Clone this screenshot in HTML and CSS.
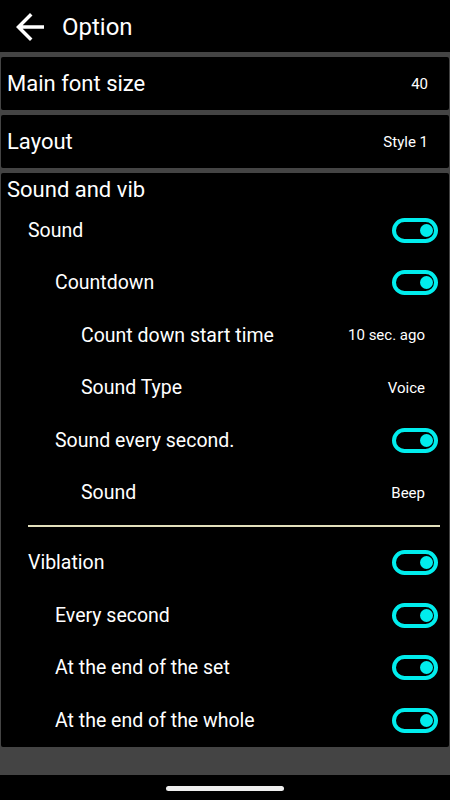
FILE: index.html
```html
<!DOCTYPE html>
<html lang="en">
<head>
  <meta charset="UTF-8">
  <title>Option</title>
  <link rel="stylesheet" href="styles.css">
</head>
<body>
  <div class="app">
    <header class="toolbar">
      <svg class="back" viewBox="0 0 24 24" width="42" height="42"><path fill="#fff" d="M20 11H7.83l5.59-5.59L12 4l-8 8 8 8 1.41-1.41L7.83 13H20v-2z"/></svg>
      <h1>Option</h1>
    </header>

    <main class="list">
      <section class="card single">
        <span class="label big">Main font size</span>
        <span class="value">40</span>
      </section>

      <section class="card single">
        <span class="label big">Layout</span>
        <span class="value">Style 1</span>
      </section>

      <section class="card group">
        <div class="group-title big">Sound and vib</div>

        <div class="row lv1"><span class="label">Sound</span><span class="toggle on"></span></div>
        <div class="row lv2"><span class="label">Countdown</span><span class="toggle on"></span></div>
        <div class="row lv3"><span class="label">Count down start time</span><span class="value">10 sec. ago</span></div>
        <div class="row lv3"><span class="label">Sound Type</span><span class="value">Voice</span></div>
        <div class="row lv2"><span class="label">Sound every second.</span><span class="toggle on"></span></div>
        <div class="row lv3"><span class="label">Sound</span><span class="value">Beep</span></div>

        <div class="divider"></div>

        <div class="row lv1"><span class="label">Viblation</span><span class="toggle on"></span></div>
        <div class="row lv2"><span class="label">Every second</span><span class="toggle on"></span></div>
        <div class="row lv2"><span class="label">At the end of the set</span><span class="toggle on"></span></div>
        <div class="row lv2"><span class="label">At the end of the whole</span><span class="toggle on"></span></div>
      </section>
    </main>

    <footer class="navbar"><span class="home"></span></footer>
  </div>
</body>
</html>
```

FILE: styles.css
```css
* { box-sizing: border-box; }
body { margin: 0; background: #000; color: #fff; font-family: Roboto, "Noto Sans", sans-serif; }
.app { width: 450px; height: 800px; display: flex; flex-direction: column; overflow: hidden; }

.toolbar { height: 52px; display: flex; align-items: center; flex: none; }
.back { margin-left: 9px; margin-top: 1px; }
.toolbar h1 { margin: 2px 0 0 11px; font-size: 24px; font-weight: 400; }

.list { flex: 1; background: #444; padding: 5px 0 28px; display: flex; flex-direction: column; gap: 5px; }
.card { background: #000; margin: 0 1px; border-radius: 2px; }
.big { font-size: 22px; }

.single { height: 53px; display: flex; align-items: center; justify-content: space-between; padding: 0 21px 0 6px; }
.value { font-size: 15px; }

.group { flex: 1; }
.group-title { height: 31px; display: flex; align-items: center; padding: 1px 0 0 6px; }

.row { height: 52.5px; display: flex; align-items: center; justify-content: space-between; padding-right: 11px; font-size: 19.5px; }
.row .value { margin-right: 13px; }
.lv1 { padding-left: 27px; }
.lv2 { padding-left: 54px; }
.lv3 { padding-left: 80px; }

.divider { height: 2px; background: #e2dfbb; margin: 6px 9px 9.5px 27px; }

.toggle { width: 46px; height: 25px; border: 4px solid #00eded; border-radius: 13px; position: relative; }
.toggle.on::after { content: ""; position: absolute; right: 1px; top: 2px; width: 13px; height: 13px; border-radius: 50%; background: #00eded; }

.navbar { height: 27px; flex: none; display: flex; justify-content: center; padding-top: 11px; }
.home { width: 118px; height: 5px; border-radius: 3px; background: #eee; }
```
